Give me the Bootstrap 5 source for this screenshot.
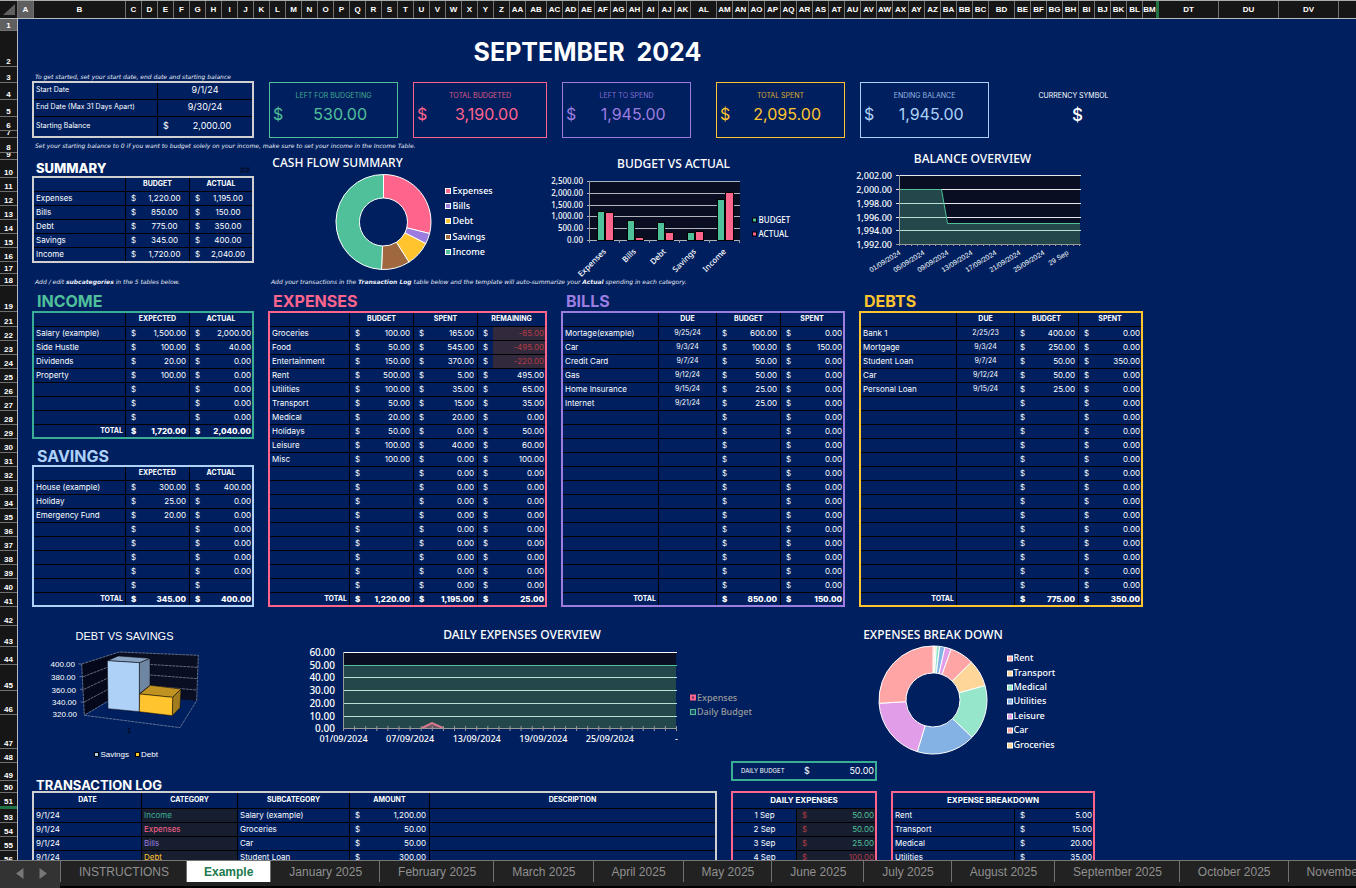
<!DOCTYPE html>
<html lang="en">
<head>
<meta charset="utf-8">
<meta name="viewport" content="width=device-width, initial-scale=1">
<title>Monthly Budget</title>
<link href="https://cdn.jsdelivr.net/npm/bootstrap@5.3.0/dist/css/bootstrap.min.css" rel="stylesheet">
<style>
:root{--sheet:#001f5f;--green:#50c09a;--teal:#3aae94;--pink:#ff648c;--violet:#9b7de0;--amber:#ffc42e;--sky:#aed1f8;--silver:#d0d0d0}
body{font-family:"Inter","Open Sans",sans-serif;font-size:8px;line-height:12px;color:#fff;background:var(--sheet)}
/* column and row headings */
.colheads{height:19px;background:#161616;border-top:1px solid #a9aeae;border-bottom:1px solid #b9bcbc;font:bold 8px/17px "Liberation Sans",sans-serif}
.colheads>div{flex:none;text-align:center;border-right:1px solid #707070;overflow:hidden;white-space:nowrap}
.colheads .w16{width:16px}.colheads .w18{width:18px}.colheads .w21{width:21px}.colheads .w26{width:26px}.colheads .w60{width:60px}.colheads .w92{width:92px}
.colheads .edge{border-right:3px solid #217346}
.picked{background:#606060}
.rowheads{width:18px;flex:none;background:#161616;border-right:1px solid #b9bcbc;font:bold 8px/9px "Liberation Sans",sans-serif}
.rowheads>div{display:flex;align-items:flex-end;justify-content:center;border-bottom:1px solid #707070;overflow:hidden;flex:none}
.rowheads .edge{border-bottom:3px solid #217346}
/* sheet */
.sheet{padding-left:14px;min-width:0}
.wrap{width:1111px}
.title{height:48px;font-size:25px;line-height:30px;font-weight:700;white-space:pre}
.note{font:italic 6px/8px "DejaVu Sans",sans-serif;color:#e8edf6;white-space:nowrap;padding-left:3px}
.h14{height:14px}.h15{height:15px}.h12{height:12px}
.big{font-size:16px;line-height:20px;font-weight:700;height:25px;padding:5px 0 0 5px;margin:0}
.big.lower{height:26px;padding-top:7px}
.mid{font-size:13px;line-height:16px;font-weight:800;margin:0;padding-left:4px}
.mid.log{font-weight:700;line-height:12px}
.sum-head{height:23px}
.gap14{gap:14px}.gap15{gap:15px}
.w222{width:222px;flex:none}
.lead-note{width:236px;flex:none}
table.ledger{table-layout:fixed;border-collapse:separate;border-spacing:0;border:2px solid var(--c);flex:none}
.ledger td,.ledger th{height:14px;padding:0;border-right:1px solid #000;border-bottom:1px solid #000;white-space:nowrap;overflow:hidden;line-height:12px;vertical-align:top}
.ledger th{font-size:7px;font-weight:700;text-align:center}
.ledger .title-th{font-size:8px}
.ledger tr>:last-child{border-right:0}
.ledger .cur{border-right:0;padding-left:5px}
.ledger .amt{text-align:right;padding-right:3px}
.ledger tr>.amt:last-child{padding-right:1px}
.ledger .lbl{padding-left:2px}
.ledger .date{text-align:center;font-size:7px}
.ledger .tot td{height:12px;border-bottom:0;font-weight:800}
.ledger .tot .lbl{text-align:right;padding-right:2px;font-size:7px;font-weight:700}
.ledger .neg{background:#33293c;color:#b23a44}
.ledger .shade{background:#171e30}
.ledger .red{color:#b23a44}
.ledger .grn{color:var(--green)}
.centred .amt,.ledger .mid-amt{text-align:center;padding-right:1px}
.centred tr:last-child td{height:13px;border-bottom:0}
.ledger.tall th{height:16px;line-height:14px}
.setup td{font-size:9px}
.setup .lbl{font-size:7px}
.ledger.setup td{height:17px;line-height:14px}
.ledger.setup tr:last-child td{height:19px;border-bottom:0;line-height:18px}
.kpi{width:129px;height:56px;margin-top:1px;border:1px solid var(--c);color:var(--c);flex:none;padding:8px 0 0}
.kpi.wide{width:134px}
.kpi.apart{margin-left:10px}
.kpi h3{font-size:7px;line-height:10px;font-weight:400;text-align:center;margin:0;opacity:.85}
.kpi p{font-size:16px;line-height:20px;margin:3px 0 0;padding-left:3px;display:flex}
.kpi p span:last-child{flex:1;text-align:center}
.currency{width:140px;padding:10px 0 0;text-align:center}
.currency h3{font-size:7px;line-height:10px;font-weight:400;margin:0}
.currency p{font-size:17px;line-height:20px;font-weight:500;margin:4px 0 0;padding-left:8px}
.daily{height:20px;border:2px solid var(--teal);padding:0 1px 0 8px;margin-bottom:10px;font-size:9px}
.daily .name{font-size:6px;width:63px}
svg{overflow:visible}
svg text{fill:#fff}
.t12{font:500 12px "Noto Sans",sans-serif}
.ax{font:500 9px "Noto Sans","Open Sans",sans-serif}
.ax8{font:500 8px "Noto Sans","Open Sans",sans-serif}
.ax10{font:500 10px "Noto Sans","Open Sans",sans-serif}
.ax7{font:7px "Liberation Sans",sans-serif}
.lib{font:8px "Liberation Sans",sans-serif}
.lib11{font:11px "Liberation Sans",sans-serif}
.end{text-anchor:end}.midd{text-anchor:middle}
svg .dim{fill:#999}
svg .dark{fill:#000}
/* sheet tabs */
.tabs{height:28px;background:#222;border-top:1px solid #777;font:12px/23px "Liberation Sans",sans-serif}
.tabs .arrows{width:60px;background:#333;flex:none;height:27px}
.tabs .arrows button{width:23px;height:24px;padding:0;border:0;background:none;line-height:24px}
.tabs a{display:block;height:21px;padding:0 17px 0 18px;border-left:1px solid #707070;color:#909090;text-decoration:none;white-space:nowrap}
.tabs a.on{background:#fff;color:#217a4d;font-weight:700;padding:0 17px}
.tabs .foot{height:2px;background:#000;margin-top:4px}
</style>
</head>
<body>
<div class="vh-100 d-flex flex-column overflow-hidden">
<div class="colheads d-flex flex-shrink-0" id="cols"></div>
<div class="d-flex flex-grow-1 overflow-hidden">
  <div class="rowheads d-flex flex-column" id="rows"></div>
  <main class="sheet flex-grow-1 overflow-hidden">
  <div class="wrap">
    <h1 class="title d-flex justify-content-center align-items-end m-0">SEPTEMBER  2024</h1>
    <div class="note h14 d-flex align-items-end">To get started, set your start date, end date and starting balance</div>

    <section class="d-flex gap15">
      <table class="ledger setup w222" style="--c:var(--silver)">
        <colgroup><col style="width:124px"><col style="width:15px"><col style="width:79px"></colgroup>
        <tbody>
        <tr><td class="lbl">Start Date</td><td colspan="2" class="text-center">9/1/24</td></tr>
        <tr><td class="lbl">End Date (Max 31 Days Apart)</td><td colspan="2" class="text-center">9/30/24</td></tr>
        <tr><td class="lbl">Starting Balance</td><td class="cur">$</td><td class="mid-amt">2,000.00</td></tr>
        </tbody>
      </table>
      <div class="kpi" style="--c:var(--green)"><h3>LEFT FOR BUDGETING</h3><p><span>$</span><span>530.00</span></p></div>
      <div class="kpi wide" style="--c:var(--pink)"><h3>TOTAL BUDGETED</h3><p><span>$</span><span>3,190.00</span></p></div>
      <div class="kpi" style="--c:var(--violet)"><h3>LEFT TO SPEND</h3><p><span>$</span><span>1,945.00</span></p></div>
      <div class="kpi apart" style="--c:var(--amber)"><h3>TOTAL SPENT</h3><p><span>$</span><span>2,095.00</span></p></div>
      <div class="kpi" style="--c:var(--sky)"><h3>ENDING BALANCE</h3><p><span>$</span><span>1,945.00</span></p></div>
      <div class="currency"><h3 class="text-nowrap">CURRENCY SYMBOL</h3><p>$</p></div>
    </section>

    <div class="note h15 d-flex align-items-center">Set your starting balance to 0 if you want to budget solely on your income, make sure to set your income in the Income Table.</div>

    <section class="d-flex">
      <div class="w222">
        <div class="sum-head d-flex justify-content-between align-items-end"><h2 class="mid">SUMMARY</h2><span class="text-black opacity-75 pe-1">##</span></div>
        <div id="t-summary"></div>
      </div>
      <svg width="293" height="121" viewBox="254 153 293 121" id="flow"></svg>
      <svg width="298" height="121" viewBox="547 153 298 121" id="bva"></svg>
      <svg width="298" height="121" viewBox="845 153 298 121" id="bal"></svg>
    </section>

    <div class="d-flex h12 align-items-end">
      <div class="note lead-note">Add / edit <b>subcategories</b> in the 5 tables below.</div>
      <div class="note">Add your transactions in the <b>Transaction Log</b> table below and the template will auto-summarize your <b>Actual</b> spending in each category.</div>
    </div>

    <section class="d-flex gap14">
      <div><h2 class="big" style="color:var(--green)">INCOME</h2><div id="t-income"></div>
           <h2 class="big lower" style="color:var(--sky)">SAVINGS</h2><div id="t-savings"></div></div>
      <div><h2 class="big" style="color:var(--pink)">EXPENSES</h2><div id="t-expenses"></div></div>
      <div><h2 class="big" style="color:var(--violet)">BILLS</h2><div id="t-bills"></div></div>
      <div><h2 class="big" style="color:var(--amber)">DEBTS</h2><div id="t-debts"></div></div>
    </section>

    <section class="d-flex">
      <svg width="222" height="154" viewBox="32 607 222 154" id="dvs"></svg>
      <svg width="547" height="154" viewBox="254 607 547 154" id="daily"></svg>
      <svg width="342" height="154" viewBox="801 607 342 154" id="brk"></svg>
    </section>

    <section class="d-flex gap14 align-items-end">
      <div><h2 class="mid log">TRANSACTION LOG</h2><div id="t-log"></div></div>
      <div>
        <div class="daily d-flex align-items-center"><span class="name">DAILY BUDGET</span><span>$</span><span class="ms-auto">50.00</span></div>
        <div id="t-daily"></div>
      </div>
      <div id="t-break"></div>
    </section>
  </div>
  </main>
</div>
<nav class="tabs d-flex flex-shrink-0" aria-label="Sheets">
  <div class="arrows d-flex ps-2">
    <button type="button" aria-label="Previous sheet"><svg width="8" height="11"><path d="M7.500 0V11L0 5.500z" fill="#777"/></svg></button>
    <button type="button" aria-label="Next sheet"><svg width="8" height="11"><path d="M.5 0V11L8 5.500z" fill="#777"/></svg></button>
  </div>
  <div class="flex-grow-1 overflow-hidden"><div class="d-flex" id="tabs"></div><div class="foot"></div></div>
</nav>
</div>
<script src="https://cdn.jsdelivr.net/npm/bootstrap@5.3.0/dist/js/bootstrap.bundle.min.js"></script>
<script>
const $ = id => document.getElementById(id);
// column letters, with the wider columns listed apart
const name = n => n < 26 ? String.fromCharCode(65 + n) : String.fromCharCode(64 + Math.floor(n / 26)) + String.fromCharCode(65 + n % 26);
const wide = {B: 92, AB: 21, AL: 26, BD: 26};
let h = '<div class="w18"><svg width="12" height="11"><path d="M12 0V11H0z" fill="#606060"/></svg></div>';
for (let i = 0; i < 65; i++) { const c = name(i); h += `<div class="w${wide[c] || 16}${c === 'A' ? ' picked' : ''}${c === 'BM' ? ' edge' : ''}">${c}</div>`; }
for (const c of ['DT', 'DU', 'DV', '']) h += `<div class="w60">${c}</div>`;
$('cols').innerHTML = h;
const rh = [[1,12],[2,36],[3,16],[4,17],[5,17],[6,14],[7,7],[8,15],[9,7],[10,18],[11,14],[12,14],[13,14],[14,14],[15,14],[16,14],[17,12],[18,12],[19,26],[21,15]];
for (let r = 22; r < 42; r++) rh.push([r, 14]);
rh.push([42,19],[43,21],[44,18],[45,26],[46,24],[47,34],[48,14],[49,18],[50,12],[51,16],[53,14],[54,14],[55,14],[56,14]);
$('rows').innerHTML = rh.map(([n, x]) => `<div class="${n === 1 ? 'picked' : ''}${n === 51 ? 'edge' : ''}" style="height:${x}px">${n}</div>`).join('');
$('tabs').innerHTML = ['INSTRUCTIONS','Example','January 2025','February 2025','March 2025','April 2025','May 2025','June 2025','July 2025','August 2025','September 2025','October 2025','November 2025']
  .map((t, i) => `<a href="#"${i === 1 ? ' class="on" aria-current="page"' : ''}>${t}</a>`).join('');

/* tables: kinds are l (label), d (date), m (money: symbol cell and amount cell) */
function cell(kind, v) {
  if (kind === 'm') return `<td class="cur">$</td><td class="amt${String(v).startsWith('-') ? ' neg' : ''}">${v}</td>`;
  return `<td class="${kind === 'd' ? 'date' : 'lbl'}">${v}</td>`;
}
function ledger(id, color, kinds, widths, heads, rows, total, extra = '') {
  const cols = widths.map((w, i) => kinds[i] === 'm' ? `<col style="width:15px"><col style="width:${w - 15}px">` : `<col style="width:${w}px">`).join('');
  const body = rows.map(r => '<tr>' + [...kinds].map((k, i) => cell(k, r[i] ?? '')).join('') + '</tr>').join('');
  const tot = total ? '<tr class="tot">' + [...kinds].map((k, i) => cell(k, total[i])).join('') + '</tr>' : '';
  const w = widths.reduce((a, b) => a + b, 4);
  $(id).innerHTML = `<table class="ledger ${extra}" style="--c:${color};width:${w}px"><colgroup>${cols}</colgroup><thead><tr>` +
    heads.map((t, i) => `<th${kinds[i] === 'm' ? ' colspan="2"' : ''}>${t}</th>`).join('') + `</tr></thead><tbody>${body}${tot}</tbody></table>`;
}
const pad = (rows, n, fill) => { while (rows.length < n) rows.push(fill); return rows; };
ledger('t-summary', 'var(--silver)', 'lmm', [92,64,62], ['','BUDGET','ACTUAL'],
  [['Expenses','1,220.00','1,195.00'],['Bills','850.00','150.00'],['Debt','775.00','350.00'],['Savings','345.00','400.00'],['Income','1,720.00','2,040.00']], null, 'centred');
ledger('t-income', 'var(--teal)', 'lmm', [92,64,62], ['','EXPECTED','ACTUAL'],
  pad([['Salary (example)','1,500.00','2,000.00'],['Side Hustle','100.00','40.00'],['Dividends','20.00','0.00'],['Property','100.00','0.00']], 7, ['','','0.00']), ['TOTAL','1,720.00','2,040.00']);
ledger('t-savings', 'var(--sky)', 'lmm', [92,64,62], ['','EXPECTED','ACTUAL'],
  pad([['House (example)','300.00','400.00'],['Holiday','25.00','0.00'],['Emergency Fund','20.00','0.00']], 7, ['','','0.00']).concat([['','','']]), ['TOTAL','345.00','400.00']);
ledger('t-expenses', 'var(--pink)', 'lmmm', [80,64,64,67], ['','BUDGET','SPENT','REMAINING'],
  pad([['Groceries','100.00','165.00','-65.00'],['Food','50.00','545.00','-495.00'],['Entertainment','150.00','370.00','-220.00'],['Rent','500.00','5.00','495.00'],['Utilities','100.00','35.00','65.00'],['Transport','50.00','15.00','35.00'],['Medical','20.00','20.00','0.00'],['Holidays','50.00','0.00','50.00'],['Leisure','100.00','40.00','60.00'],['Misc','100.00','0.00','100.00']], 19, ['','','0.00','0.00']), ['TOTAL','1,220.00','1,195.00','25.00']);
ledger('t-bills', 'var(--violet)', 'ldmm', [96,58,64,62], ['','DUE','BUDGET','SPENT'],
  pad([['Mortage(example)','9/25/24','600.00','0.00'],['Car','9/3/24','100.00','150.00'],['Credit Card','9/7/24','50.00','0.00'],['Gas','9/12/24','50.00','0.00'],['Home Insurance','9/15/24','25.00','0.00'],['Internet','9/21/24','25.00','0.00']], 19, ['','','','0.00']), ['TOTAL','','850.00','150.00']);
ledger('t-debts', 'var(--amber)', 'ldmm', [96,58,64,62], ['','DUE','BUDGET','SPENT'],
  pad([['Bank 1','2/25/23','400.00','0.00'],['Mortgage','9/3/24','250.00','0.00'],['Student Loan','9/7/24','50.00','350.00'],['Car','9/12/24','50.00','0.00'],['Personal Loan','9/15/24','25.00','0.00']], 19, ['','','','0.00']), ['TOTAL','','775.00','350.00']);
ledger('t-log', 'var(--silver)', 'lllml', [108,96,112,80,285], ['DATE','CATEGORY','SUBCATEGORY','AMOUNT','DESCRIPTION'],
  [['9/1/24','Income','Salary (example)','1,200.00'],['9/1/24','Expenses','Groceries','50.00'],['9/1/24','Bills','Car','50.00'],['9/1/24','Debt','Student Loan','300.00']], null, 'tall');
['--teal','--pink','--violet','--amber'].forEach((c, i) => { const td = $('t-log').querySelectorAll('tbody tr')[i].cells[1]; td.classList.add('shade'); td.style.color = `var(${c})`; });
$('t-daily').innerHTML = '<table class="ledger tall" style="--c:var(--pink);width:146px"><colgroup><col style="width:64px"><col style="width:15px"><col style="width:63px"></colgroup><thead><tr><th colspan="3" class="title-th">DAILY EXPENSES</th></tr></thead><tbody>' +
  [['1 Sep','50.00'],['2 Sep','50.00'],['3 Sep','25.00'],['4 Sep','100.00']].map(([d, v]) => `<tr><td class="text-center">${d}</td><td class="cur shade red">$</td><td class="amt shade ${v === '100.00' ? 'red' : 'grn'}">${v}</td></tr>`).join('') + '</tbody></table>';
$('t-break').innerHTML = '<table class="ledger tall" style="--c:var(--pink);width:204px"><colgroup><col style="width:122px"><col style="width:15px"><col style="width:63px"></colgroup><thead><tr><th colspan="3" class="title-th">EXPENSE BREAKDOWN</th></tr></thead><tbody>' +
  [['Rent','5.00'],['Transport','15.00'],['Medical','20.00'],['Utilities','35.00']].map(([d, v]) => '<tr>' + cell('l', d) + cell('m', v) + '</tr>').join('') + '</tbody></table>';

/* charts */
const T = (x, y, s, c, more = '') => `<text x="${x}" y="${y}" class="${c}" ${more}>${s}</text>`;
const L = (x1, y1, x2, y2, c) => `<line x1="${x1}" y1="${y1}" x2="${x2}" y2="${y2}" stroke="${c}"/>`;
const box = (x, y, s, fill, stroke, w = 1) => `<rect x="${x}" y="${y}" width="${s}" height="${s}" fill="${fill}" stroke="${stroke}" stroke-width="${w}"/>`;
function ring(cx, cy, R, r, stops) {
  let a = 0, out = '';
  const p = (q, d) => { const t = d * Math.PI / 180; return (cx + q * Math.sin(t)).toFixed(2) + ' ' + (cy - q * Math.cos(t)).toFixed(2); };
  for (const [b, fill] of stops) {
    const big = b - a > 180 ? 1 : 0;
    out += `<path d="M${p(R, a)}A${R} ${R} 0 ${big} 1 ${p(R, b)}L${p(r, b)}A${r} ${r} 0 ${big} 0 ${p(r, a)}Z" fill="${fill}" stroke="#fff"/>`;
    a = b;
  }
  return out;
}
const G = '#50c09a', P = '#ff648c', V = '#9b7de0', Y = '#ffc42e', B = '#a0683e', NIGHT = '#0a0e23', FILL = '#24474b';
$('flow').innerHTML = T(337.5, 167, 'CASH FLOW SUMMARY', 't12 midd') +
  ring(383.5, 222, 47.5, 24, [[104, P], [117, V], [147.6, Y], [182.4, B], [360, G]]) +
  [['Expenses', P, 190.5], ['Bills', V, 205.5], ['Debt', Y, 220.5], ['Savings', B, 236.5], ['Income', G, 251.5]].map(([t, c, y]) => box(445.5, y - 2, 5, c, '#fff') + T(452.5, y + 3.5, t, 'ax')).join('');

let s = T(673.5, 168, 'BUDGET VS ACTUAL', 't12 midd') + `<rect x="589" y="181" width="151" height="60" fill="${NIGHT}"/>`;
['2,500.00','2,000.00','1,500.00','1,000.00','500.00','0.00'].forEach((t, i) => { const y = Math.round(181 + i * 11.8) + .5; s += L(587, y, 740, y, '#b0b4bd') + T(583, y + 2.5, t, 'ax8 end'); });
[[211.5,212.5,'Expenses'],[220.5,237.5,'Bills'],[222.5,232.5,'Debt'],[232.5,231.5,'Savings'],[199.5,192.5,'Income']].forEach(([a, b, t], i) => {
  const x = 597.5 + 30 * i;
  s += `<rect x="${x}" y="${a}" width="7" height="${240.5 - a}" fill="${G}" stroke="#000"/><rect x="${x + 8}" y="${b}" width="8" height="${240.5 - b}" fill="${P}" stroke="#000"/>`;
  s += T(x + 9, 252, t, 'ax8 end', `transform="rotate(-45 ${x + 9} 252)"`) + L(x + 22, 240, x + 22, 243, '#999');
});
s += L(589.5, 181, 589.5, 243, '#999') + box(752.5, 218, 4, G, '#000') + T(758.5, 223, 'BUDGET', 'ax8') + box(752.5, 232, 4, P, '#000') + T(758.5, 237, 'ACTUAL', 'ax8');
$('bva').innerHTML = s;

s = T(972.5, 163, 'BALANCE OVERVIEW', 't12 midd') + `<rect x="899" y="175" width="181" height="69" fill="${NIGHT}"/><path d="M899 189.500H941.500L947.500 223.500H1080V244.500H899z" fill="${FILL}"/>`;
[175.5,189.5,203.5,217.5,230.5,244.5].forEach((y, i) => { s += L(896, y, 1081, y, i === 5 ? '#999' : i === 4 ? '#b5e0d4' : '#e8e8ec') + (i < 4 && i > 1 ? L(900, y, i === 2 ? 944 : 946, y, '#b5e0d4') : '') + T(892, y + 3, (2002 - 2 * i).toLocaleString('en-US') + '.00', 'ax end'); });
for (let x = 899.5; x < 1082; x += 6) s += L(x, 244, x, 246, '#999');
s += L(899.5, 175, 899.5, 245, '#999') + `<path d="M900 189.500H941.500L947.500 223.500H1080" fill="none" stroke="${G}"/>`;
['01/09/2024','05/09/2024','09/09/2024','13/09/2024','17/09/2024','21/09/2024','25/09/2024','29 Sep'].forEach((t, i) => { const x = 901 + 24 * i; s += T(x, 254, t, 'ax7 end', `transform="rotate(-32 ${x} 254)"`); });
$('bal').innerHTML = s;

const poly = (pts, f, st = '#000') => `<polygon points="${pts}" fill="${f}" stroke="${st}" stroke-width="1.500"/>`;
s = T(124.5, 640, 'DEBT VS SAVINGS', 'midd lib11') + '<g transform="translate(40 640) scale(.33333)">' +
  poly('125,72 238,36 238,163 133,224', '#04081a', 'none') + poly('238,36 475,46 470,182 238,163', '#0a0e23', 'none') +
  '<path d="M125 72L238 36L475 46L470 182L420 263L133 226L238 163M125 72L133 226M130 110L238 68L474 82M132 148L238 98L472 116M133 186L238 130L470 150M115 72h10M118 110h12M120 148h12M122 186h12" fill="none" stroke="#8f98ab" stroke-width="2" stroke-dasharray="9 2"/>' +
  poly('298,68 330,55 330,136 298,162', '#6f86a3') + poly('202,62 235,48 330,55 298,68', '#8aa5c5') + poly('202,62 298,68 298,215 204,206', '#aed1f8') +
  poly('398,172 423,147 420,203 397,227', '#a17c1d') + poly('299,162 331,136 423,147 398,172', '#bf9222') + poly('299,162 398,172 397,227 298,215', '#ffc42e') + '</g>';
['400.00','380.00','360.00','340.00','320.00'].forEach((t, i) => s += T(75 + i / 2, [667,680,693,705,717][i], t, 'lib end'));
s += T(127, 733, '1', 'lib dark') + box(94.500, 752.500, 4, '#aed1f8', '#000') + T(100.5, 757, 'Savings', 'lib') + box(135.5, 752.5, 4, '#ffc42e', '#000') + T(141, 757, 'Debt', 'lib');
$('dvs').innerHTML = s;

s = T(522, 639, 'DAILY EXPENSES OVERVIEW', 't12 midd') + `<rect x="343" y="652" width="333" height="76" fill="${NIGHT}"/><rect x="343" y="665" width="333" height="63" fill="${FILL}"/><path d="M422 728L432 722L443 728z" fill="#6b5560"/><path d="M422 728L432 723L443 728" stroke="#d8788c" stroke-width="2" fill="none"/>`;
[652.5,665.5,677.5,690.5,703.5,716.5,728.5].forEach((y, i) => { s += L(343, y, 677, y, i === 0 ? '#fff' : i === 1 ? G : i === 6 ? '#999' : '#b5e0d4') + T(335, y + 3.5, (60 - 10 * i) + '.00', 'ax10 end'); });
for (let i = 0; i <= 30; i++) { const x = 343.5 + i * 11.1; s += L(x, 726, x, 731, '#999'); }
s += L(343.5, 652, 343.5, 731, '#999');
['01/09/2024','07/09/2024','13/09/2024','19/09/2024','25/09/2024','-'].forEach((t, i) => s += T(343.5 + 66.6 * i, 742, t, 'ax midd'));
s += box(691, 695.5, 4, '#5a3070', P, 2) + T(697, 700.5, 'Expenses', 'ax dim') + box(690.5, 709.5, 5, '#1c4868', G) + T(697, 714.5, 'Daily Budget', 'ax dim');
$('daily').innerHTML = s;

const c5 = ['#ffa5a5', '#ffd699', '#95e6ca', '#84b2e4', '#e29de9'];
$('brk').innerHTML = T(933, 639, 'EXPENSES BREAK DOWN', 't12 midd') +
  ring(933, 700, 54, 27, [1.8,3.6,7.1,12.8,19.6,45.5,74.6,133.7,197,266.5,360].map((a, i) => [a, c5[i % 5]])) +
  ['Rent','Transport','Medical','Utilities','Leisure','Car','Groceries'].map((t, i) => { const y = [658,673,687,701,716,730,745][i]; return box(1007.5, y - 2, 5, c5[i % 5], '#fff') + T(1013.5, y + 3, t, 'ax'); }).join('');
</script>
</body>
</html>
